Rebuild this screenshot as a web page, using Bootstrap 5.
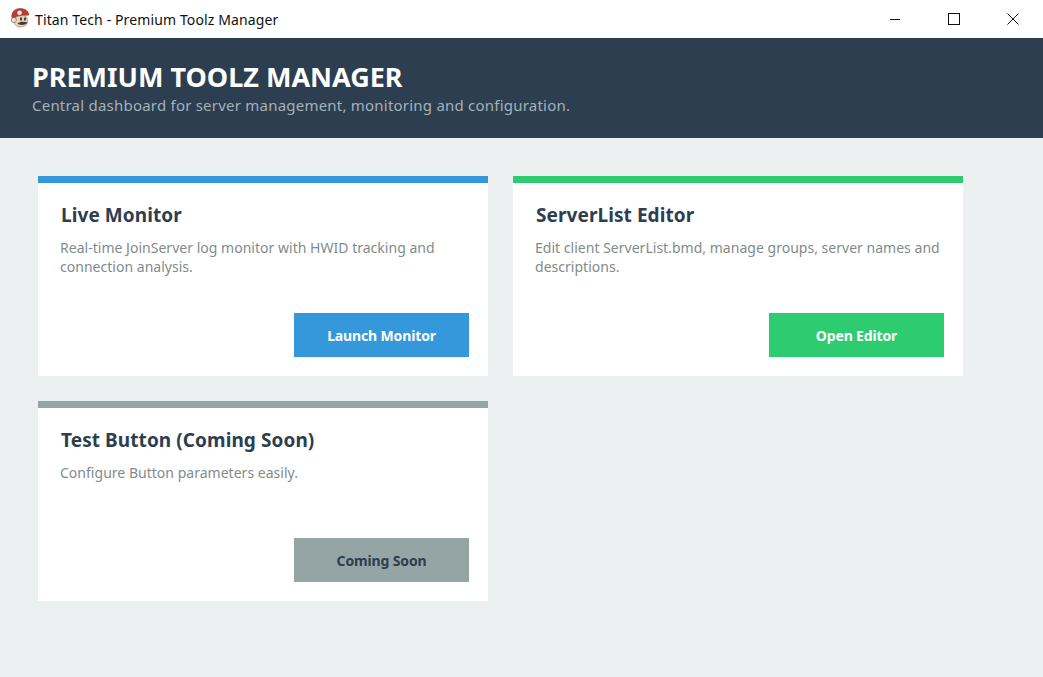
<!doctype html>
<html lang="en">
<head>
  <meta charset="utf-8">
  <meta name="viewport" content="width=device-width, initial-scale=1">
  <title>Titan Tech - Premium Toolz Manager</title>
  <link href="https://cdn.jsdelivr.net/npm/bootstrap@5.3.3/dist/css/bootstrap.min.css" rel="stylesheet">
  <style>
    html, body { height: 100%; }
    body { font-family: "Noto Sans", "Open Sans", sans-serif; background: #ecf0f1; overflow: hidden; }
    .win-bar { height: 38px; background: #fff; color: #111; font-size: 14px; letter-spacing: .12px; padding-left: 10px; padding-right: 1px; }
    .win-icon { width: 20px; height: 20px; margin-right: 5px; margin-top: -2px; }
    .win-btn { width: 59px; height: 38px; }
    .app-head { height: 100px; background: #2c3e50; padding: 22px 32px 0; }
    .app-head h1 { font-size: 27px; font-weight: 700; line-height: 34px; color: #fff; margin: 0; }
    .app-head p { font-size: 15px; line-height: 20px; letter-spacing: .22px; color: #a5b1b8; margin: 1px 0 0; }
    .tool-grid { display: grid; grid-template-columns: 450px 450px; grid-auto-rows: 200px; gap: 25px; padding: 38px; }
    .tool-card { background: #fff; border-top: 7px solid; padding: 20px 19px 19px 23px; }
    .tool-card h2 { font-size: 19px; font-weight: 700; line-height: 24px; letter-spacing: .08px; color: #2c3e50; margin: 0 0 11px; }
    .tool-card p { font-size: 14px; line-height: 19px; letter-spacing: .02px; color: #7f8c8d; margin: 0 0 0 -1px; width: 408px; }
    .tool-btn { width: 175px; height: 44px; border: 0; border-radius: 0; font-size: 14px; font-weight: 700; letter-spacing: -.14px; color: #fff; }
    .blue { border-color: #3498db; }
    .green { border-color: #2ecc71; }
    .gray { border-color: #95a5a6; }
    .tool-btn.blue { background: #3498db; }
    .tool-btn.green { background: #2ecc71; }
    .tool-btn.gray { background: #95a5a6; color: #2c3e50; }
  </style>
</head>
<body>
  <div class="win-bar d-flex align-items-center">
    <svg class="win-icon flex-shrink-0" viewBox="0 0 20 20">
      <path d="M2 10C1 4 5 .5 10 .5c5 0 8.500 2.500 9 6.500l-6 .5-7 2z" fill="#c23a32" stroke="#6d2a28" stroke-width=".5"/>
      <path d="M5 9.500c2-1.500 8-2.500 10.500-1.500 2 1 2.500 5 1.500 7.500-1 3.500-8 4.500-10.500 2.500-2.500-2-3-6.500-1.500-8.500z" fill="#f0d2b8" stroke="#77675f" stroke-width=".5"/>
      <circle cx="3.800" cy="12" r="2.600" fill="#e9e4df" stroke="#555" stroke-width=".6"/>
      <circle cx="9.500" cy="4.800" r="2.300" fill="#f1eded"/>
      <ellipse cx="11" cy="11" rx="1.100" ry="1.800" fill="#2f3f55"/>
      <ellipse cx="15" cy="11" rx="1.100" ry="1.800" fill="#2f3f55"/>
      <path d="M7.500 15.500c2-2 7-2.500 10-1-1 2.500-8 3.500-10 1z" fill="#4a3a33"/>
    </svg>
    <span class="flex-grow-1">Titan Tech - Premium Toolz Manager</span>
    <div class="win-btn d-flex align-items-center justify-content-center">
      <svg width="12" height="12" viewBox="0 0 12 12"><path d="M1 6.500h10" stroke="#111" fill="none"/></svg>
    </div>
    <div class="win-btn d-flex align-items-center justify-content-center">
      <svg width="12" height="12" viewBox="0 0 12 12"><rect x=".5" y=".5" width="11" height="11" stroke="#111" fill="none"/></svg>
    </div>
    <div class="win-btn d-flex align-items-center justify-content-center">
      <svg width="12" height="12" viewBox="0 0 12 12"><path d="M.5.5l11 11M11.500.5l-11 11" stroke="#111" fill="none"/></svg>
    </div>
  </div>

  <header class="app-head">
    <h1>PREMIUM TOOLZ MANAGER</h1>
    <p>Central dashboard for server management, monitoring and configuration.</p>
  </header>

  <main class="tool-grid">
    <section class="tool-card blue d-flex flex-column">
      <h2>Live Monitor</h2>
      <p>Real-time JoinServer log monitor with HWID tracking and connection analysis.</p>
      <div class="mt-auto d-flex justify-content-end">
        <button class="btn tool-btn blue" type="button">Launch Monitor</button>
      </div>
    </section>
    <section class="tool-card green d-flex flex-column">
      <h2>ServerList Editor</h2>
      <p>Edit client ServerList.bmd, manage groups, server names and descriptions.</p>
      <div class="mt-auto d-flex justify-content-end">
        <button class="btn tool-btn green" type="button">Open Editor</button>
      </div>
    </section>
    <section class="tool-card gray d-flex flex-column">
      <h2>Test Button (Coming Soon)</h2>
      <p>Configure Button parameters easily.</p>
      <div class="mt-auto d-flex justify-content-end">
        <button class="btn tool-btn gray" type="button">Coming Soon</button>
      </div>
    </section>
  </main>

  <script src="https://cdn.jsdelivr.net/npm/bootstrap@5.3.3/dist/js/bootstrap.bundle.min.js"></script>
</body>
</html>
